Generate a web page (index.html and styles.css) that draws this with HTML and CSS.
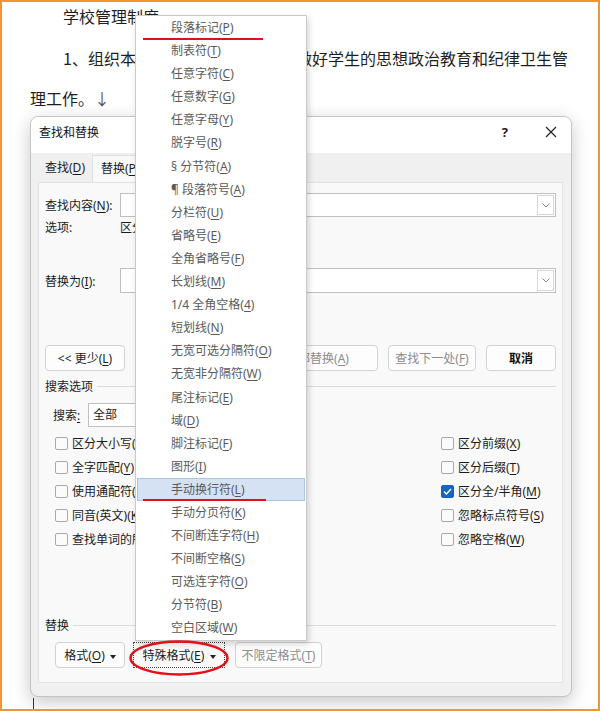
FILE: index.html
```html
<!DOCTYPE html>
<html lang="zh-CN">
<head>
  <meta charset="UTF-8">
  <meta name="viewport" content="width=device-width, initial-scale=1.0">
  <title>查找和替换</title>
  <link rel="stylesheet" href="styles.css">
</head>
<body>

  <div class="doc">
    <p class="lead">学校管理制度</p>
    <p>1、组织本班学生干部协助班主任做好学生的思想政治教育和纪律卫生管<br>理工作。<span class="para-mark">↓</span></p>
  </div>

  <div class="dialog">
    <div class="titlebar">
      <span class="title">查找和替换</span>
      <span class="help">?</span>
      <svg class="close" width="12" height="12" viewBox="0 0 12 12"><path d="M1 1L11 11M11 1L1 11" stroke="#222" stroke-width="1.2" fill="none"/></svg>
    </div>

    <div class="tabs">
      <div class="tab">查找(<u>D</u>)</div>
      <div class="tab current">替换(<u>P</u>)</div>
    </div>

    <div class="panel">
      <div class="field">
        <span class="label">查找内容(<u>N</u>):</span>
        <div class="combo">
          <span class="combo-btn"><svg width="8" height="5" viewBox="0 0 8 5"><path d="M0.5 0.5L4 4L7.5 0.5" stroke="#888" fill="none"/></svg></span>
        </div>
      </div>
      <div class="options"><span class="label">选项:</span><span>区分全/半角</span></div>
      <div class="field replace">
        <span class="label">替换为(<u>I</u>):</span>
        <div class="combo">
          <span class="combo-btn"><svg width="8" height="5" viewBox="0 0 8 5"><path d="M0.5 0.5L4 4L7.5 0.5" stroke="#888" fill="none"/></svg></span>
        </div>
      </div>

      <div class="actions">
        <button class="btn less">&lt;&lt; 更少(<u>L</u>)</button>
        <div class="actions-right">
          <button class="btn w88 off">替换(<u>R</u>)</button>
          <button class="btn w121 off">全部替换(<u>A</u>)</button>
          <button class="btn w88 off">查找下一处(<u>F</u>)</button>
          <button class="btn cancel">取消</button>
        </div>
      </div>

      <div class="group-head"><span>搜索选项</span><i></i></div>
      <div class="search-row">
        <span class="search-label">搜索<u>:</u></span>
        <div class="select">全部</div>
      </div>

      <div class="checks">
        <label class="check"><span class="box"></span><span>区分大小写(<u>H</u>)</span></label>
        <label class="check"><span class="box"></span><span>区分前缀(<u>X</u>)</span></label>
        <label class="check"><span class="box"></span><span>全字匹配(<u>Y</u>)</span></label>
        <label class="check"><span class="box"></span><span>区分后缀(<u>T</u>)</span></label>
        <label class="check"><span class="box"></span><span>使用通配符(<u>U</u>)</span></label>
        <label class="check"><span class="box on"><svg width="13" height="13" viewBox="0 0 13 13"><path d="M3 6.6L5.4 9L10 4" stroke="#fff" stroke-width="1.4" fill="none"/></svg></span><span>区分全/半角(<u>M</u>)</span></label>
        <label class="check"><span class="box"></span><span>同音(英文)(<u>K</u>)</span></label>
        <label class="check"><span class="box"></span><span>忽略标点符号(<u>S</u>)</span></label>
        <label class="check"><span class="box"></span><span>查找单词的所有形式(英文)(<u>W</u>)</span></label>
        <label class="check"><span class="box"></span><span>忽略空格(<u>W</u>)</span></label>
      </div>

      <div class="group-head replace-head"><span>替换</span><i></i></div>
      <div class="bottom-btns">
        <button class="btn w70">格式(<u>O</u>) <span class="caret"></span></button>
        <button class="btn w92 focus">特殊格式(<u>E</u>) <span class="caret"></span></button>
        <button class="btn w87 off">不限定格式(<u>T</u>)</button>
      </div>
    </div>
  </div>

  <ul class="menu">
    <li>段落标记(<u>P</u>)</li>
    <li>制表符(<u>T</u>)</li>
    <li>任意字符(<u>C</u>)</li>
    <li>任意数字(<u>G</u>)</li>
    <li>任意字母(<u>Y</u>)</li>
    <li>脱字号(<u>R</u>)</li>
    <li>§ 分节符(<u>A</u>)</li>
    <li>¶ 段落符号(<u>A</u>)</li>
    <li>分栏符(<u>U</u>)</li>
    <li>省略号(<u>E</u>)</li>
    <li>全角省略号(<u>F</u>)</li>
    <li>长划线(<u>M</u>)</li>
    <li>1/4 全角空格(<u>4</u>)</li>
    <li>短划线(<u>N</u>)</li>
    <li>无宽可选分隔符(<u>O</u>)</li>
    <li>无宽非分隔符(<u>W</u>)</li>
    <li>尾注标记(<u>E</u>)</li>
    <li>域(<u>D</u>)</li>
    <li>脚注标记(<u>F</u>)</li>
    <li>图形(<u>I</u>)</li>
    <li class="hover">手动换行符(<u>L</u>)</li>
    <li>手动分页符(<u>K</u>)</li>
    <li>不间断连字符(<u>H</u>)</li>
    <li>不间断空格(<u>S</u>)</li>
    <li>可选连字符(<u>O</u>)</li>
    <li>分节符(<u>B</u>)</li>
    <li>空白区域(<u>W</u>)</li>
  </ul>

  <!-- annotations drawn over the screenshot -->
  <div class="redline first"></div>
  <div class="redline second"></div>
  <svg class="ring" width="104" height="40" viewBox="0 0 104 40"><ellipse cx="52" cy="20" rx="48.5" ry="16.5" stroke="#e3101b" stroke-width="2.4" fill="none"/></svg>
  <div class="cursor"></div>

</body>
</html>
```

FILE: styles.css
```css
html, body { height: 100%; }
body {
  margin: 0;
  width: 600px;
  height: 711px;
  position: relative;
  overflow: hidden;
  background: #fff;
  color: #1b1b1b;
  font-family: "Noto Sans CJK SC", "Noto Sans", sans-serif;
}
body::after {
  content: "";
  position: absolute;
  inset: 0;
  border: 2px solid #f19431;
  pointer-events: none;
}
u { text-decoration: underline; text-underline-offset: 2px; }

/* document behind the dialog */
.doc { padding: 0 0 0 30px; font-size: 16px; color: #1e1e1e; }
.doc p { margin: 0; line-height: 40px; text-indent: 33px; white-space: nowrap; }
.doc .lead { margin-top: -4px; margin-bottom: 2px; }
.para-mark { color: #555; }

/* dialog window */
.dialog {
  position: absolute;
  left: 30px;
  top: 116px;
  width: 542px;
  height: 581px;
  box-sizing: border-box;
  background: #f0f0f0;
  border: 1px solid #c4c4c4;
  border-radius: 8px;
  box-shadow: 0 5px 18px rgba(0,0,0,0.22);
  font-family: "Noto Sans", "Noto Sans CJK SC", sans-serif;
  font-size: 12px;
  overflow: hidden;
}
.titlebar {
  height: 36px;
  background: #fff;
  display: flex;
  align-items: center;
  padding: 0 0 6px 8px;
  box-sizing: border-box;
}
.title { color: #111; }
.help { margin-left: auto; margin-right: 37px; font-size: 13px; font-weight: bold; color: #222; }
.close { margin-right: 14px; }

.tabs {
  height: 29px;
  display: flex;
  align-items: flex-end;
  padding-left: 7px;
}
.tab {
  height: 27px;
  line-height: 26px;
  padding: 0 7px;
  box-sizing: border-box;
}
.tab.current {
  background: #f9f9f9;
  border: 1px solid #e0e0e0;
  border-bottom: none;
  padding: 0 8px;
}

.panel {
  margin: 0 8px 0 7px;
  height: 501px;
  box-sizing: border-box;
  background: #f9f9f9;
  border: 1px solid #e2e2e2;
  padding: 10px 6px 0 6px;
}
.field { display: flex; align-items: center; height: 24px; }
.field.replace { margin-top: 32px; height: 25px; }
.label { width: 75px; flex: none; }
.combo {
  flex: 1;
  height: 100%;
  box-sizing: border-box;
  border: 1px solid #bfbfbf;
  background: #fff;
  display: flex;
  justify-content: flex-end;
}
.combo-btn {
  width: 15px;
  margin: 1px;
  border: 1px solid #d6d6d6;
  display: flex;
  align-items: center;
  justify-content: center;
}
.options { display: flex; height: 16px; line-height: 16px; margin-top: 3px; }

.actions { display: flex; margin-top: 52px; }
.actions-right { display: flex; gap: 10px; margin-left: auto; }
.btn {
  height: 26px;
  box-sizing: border-box;
  border: 1px solid #d2d2d2;
  border-radius: 4px;
  background: #fdfdfd;
  font: inherit;
  color: #1b1b1b;
  padding: 0;
}
.btn.less { width: 80px; }
.btn.off { color: #8c8c8c; }
.btn.cancel { width: 70px; font-weight: bold; color: #111; }
.w70 { width: 70px; }
.w87 { width: 87px; }
.w88 { width: 88px; }
.w92 { width: 92px; }
.w121 { width: 121px; }
.btn.focus { border: 1px dotted #444; border-radius: 0; background: #f9f9f9; }
.caret {
  display: inline-block;
  width: 0;
  height: 0;
  border-left: 3.5px solid transparent;
  border-right: 3.5px solid transparent;
  border-top: 4px solid #222;
  vertical-align: middle;
  margin-left: 2px;
}

.group-head { display: flex; align-items: center; height: 16px; margin-top: 7px; }
.group-head i { flex: 1; height: 1px; background: #dcdcdc; margin-left: 4px; }
.replace-head { margin-top: 66px; }

.search-row { display: flex; align-items: center; height: 24px; margin-top: 9px; padding-left: 8px; }
.search-label { width: 35px; }
.select {
  width: 170px;
  height: 24px;
  box-sizing: border-box;
  border: 1px solid #bfbfbf;
  background: #fff;
  padding-left: 4px;
  line-height: 22px;
}

.checks {
  display: grid;
  grid-template-columns: 386px auto;
  grid-auto-rows: 24px;
  margin-top: 4px;
  padding-left: 10px;
}
.check { display: flex; align-items: center; gap: 4px; white-space: nowrap; }
.box {
  width: 13px;
  height: 13px;
  box-sizing: border-box;
  border: 1px solid #a9a9a9;
  border-radius: 2px;
  background: #fbfbfb;
  flex: none;
}
.box.on { background: #1565c0; border-color: #1565c0; position: relative; }
.box.on svg { position: absolute; left: -1px; top: -1px; }

.bottom-btns { display: flex; margin-top: 9px; padding-left: 10px; }
.bottom-btns .w92 { margin-left: 8px; }
.bottom-btns .w87 { margin-left: 10px; }

/* special format dropdown */
.menu {
  position: absolute;
  left: 135px;
  top: 15px;
  width: 172px;
  height: 626px;
  box-sizing: border-box;
  margin: 0;
  padding: 0;
  list-style: none;
  background: #fff;
  border: 1px solid #cacaca;
  box-shadow: 2px 3px 6px rgba(0,0,0,0.16);
  font-family: "Noto Sans", "Noto Sans CJK SC", sans-serif;
  font-size: 12px;
  color: #5a5a5a;
}
.menu li {
  height: 23.1px;
  line-height: 23.1px;
  padding-left: 35px;
  white-space: nowrap;
}
.menu li.hover {
  margin: 0 1px;
  padding-left: 33px;
  box-sizing: border-box;
  background: #d4e2f4;
  border: 1px solid #abc5e7;
  line-height: 21px;
}

.redline { position: absolute; height: 2px; background: #e3101b; }
.redline.first { left: 143px; top: 38px; width: 120px; }
.redline.second { left: 143px; top: 499px; width: 123px; }
.ring { position: absolute; left: 127px; top: 638px; }
.cursor { position: absolute; left: 33px; top: 698px; width: 1px; height: 11px; background: #333; }
```
